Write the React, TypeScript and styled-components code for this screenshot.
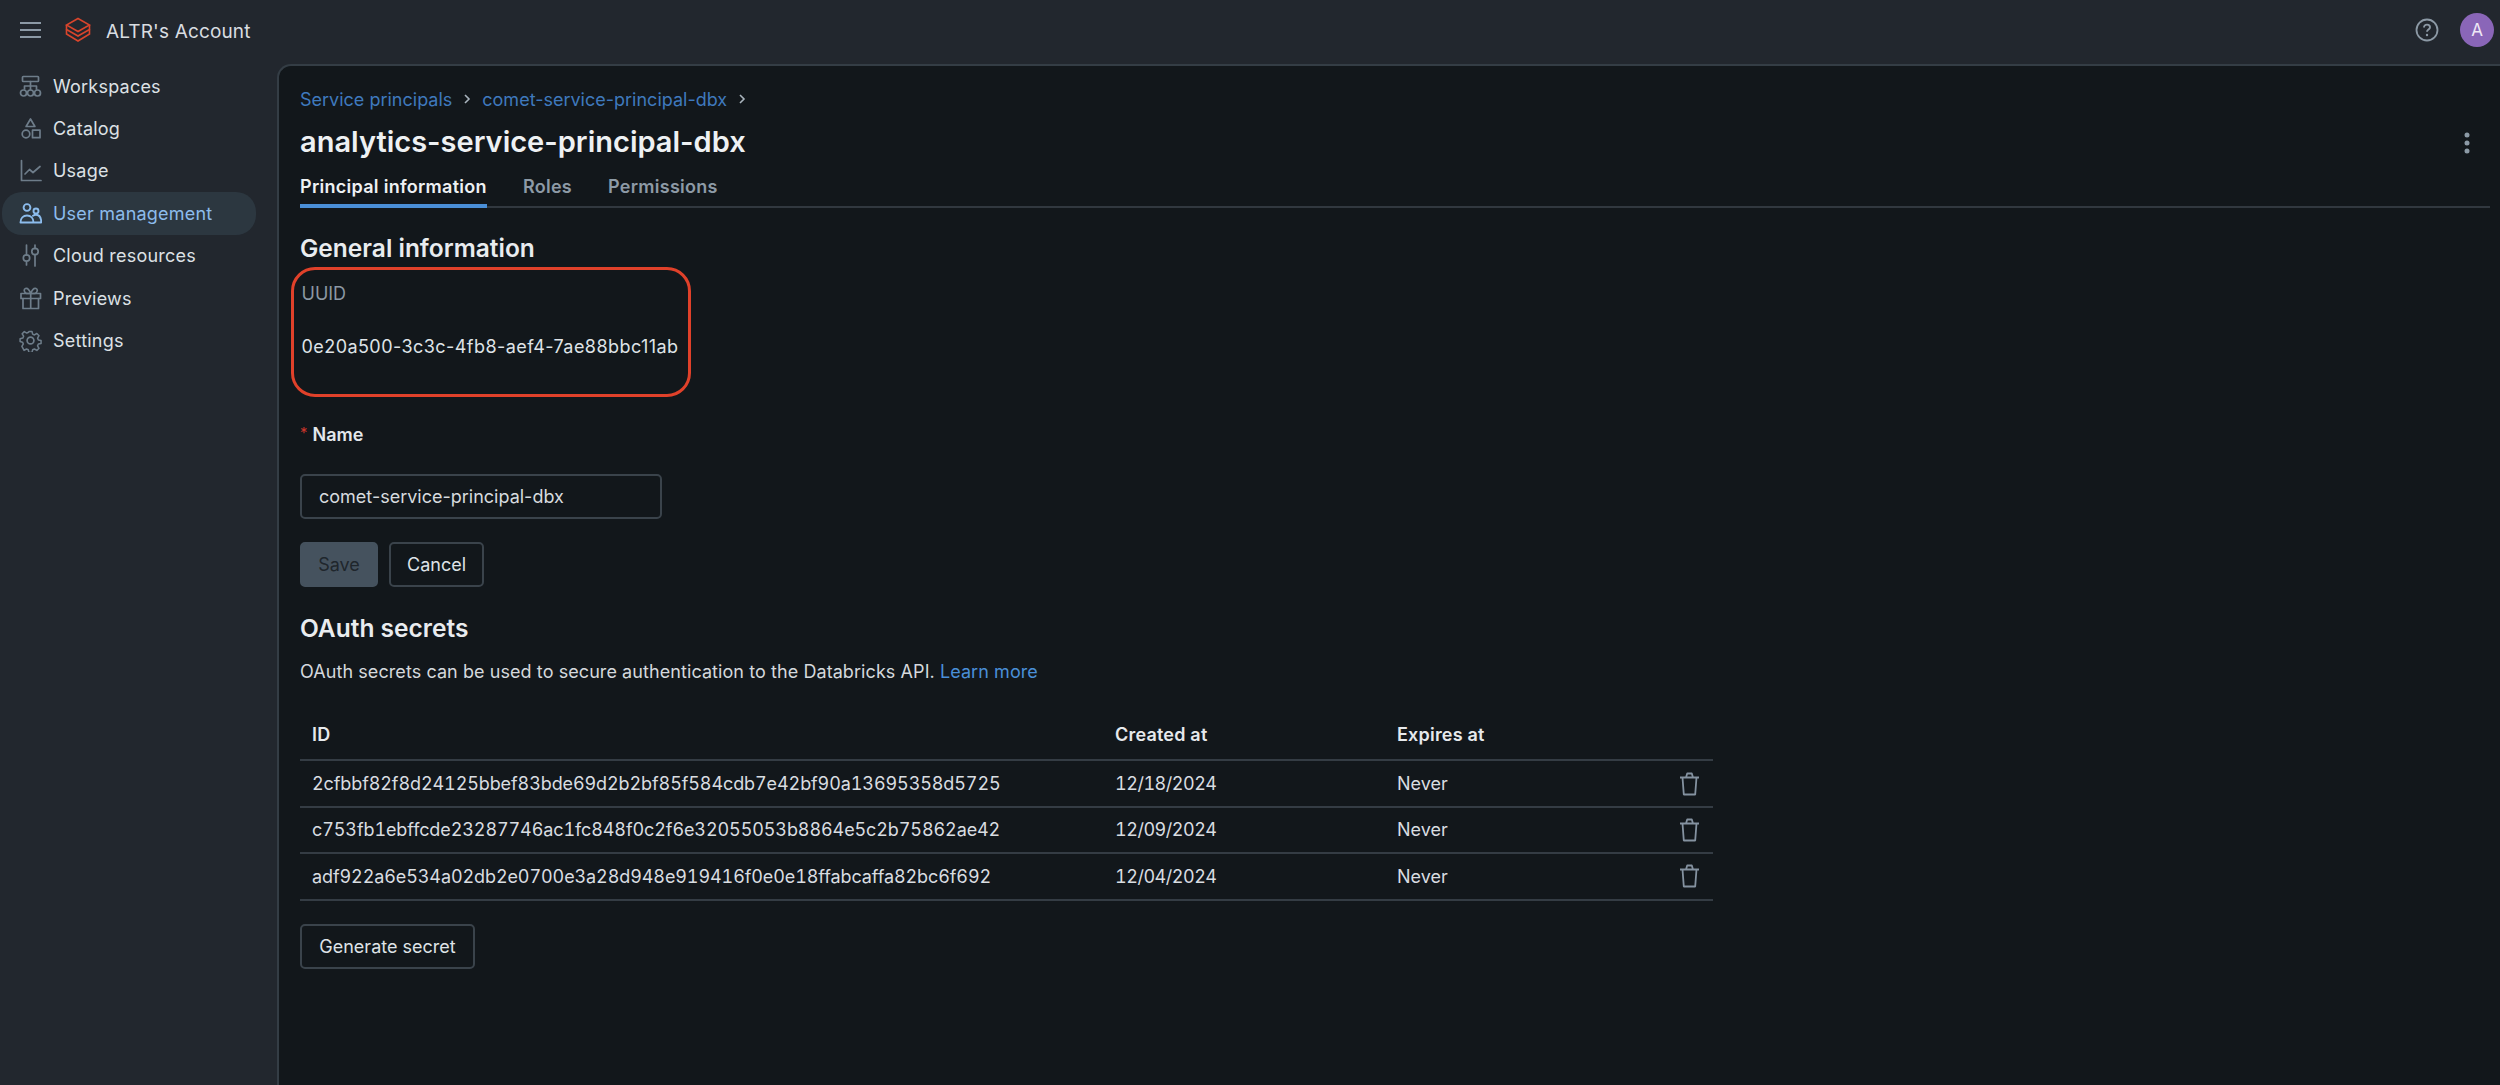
import React from "react";
import styled, { createGlobalStyle } from "styled-components";

const Global = createGlobalStyle`
  html, body { margin: 0; padding: 0; background: #22272e; }
  body { font-family: Inter, "Liberation Sans", sans-serif; color: #e3e7eb; overflow: hidden; }
  * { box-sizing: border-box; }
`;

const Shell = styled.div`
  width: 2500px;
  height: 1085px;
  display: flex;
  flex-direction: column;
  background: #22272e;
  overflow: hidden;
`;

const TopBar = styled.header`
  height: 64px;
  flex: none;
  display: flex;
  align-items: center;
  padding: 0 6px 0 20px;
`;

const Burger = styled.svg`
  width: 21px;
  height: 16px;
  flex: none;
  margin-top: -4px;
  color: #8c99a5;
`;

const Logo = styled.svg`
  width: 26px;
  height: 26px;
  margin-left: 24px;
  margin-top: -4px;
  flex: none;
`;

const AccountName = styled.div`
  margin-left: 15px;
  margin-top: -2px;
  font-size: 19px;
  letter-spacing: 0.15px;
  color: #d9dde1;
`;

const TopRight = styled.div`
  margin-left: auto;
  display: flex;
  align-items: center;
  gap: 21px;
  margin-top: -4px;
`;

const HelpIcon = styled.svg`
  width: 24px;
  height: 24px;
  color: #8c99a5;
`;

const Avatar = styled.div`
  width: 34px;
  height: 34px;
  border-radius: 50%;
  background: #8a66b8;
  color: #efe8f6;
  font-size: 17px;
  display: flex;
  align-items: center;
  justify-content: center;
`;

const Body = styled.div`
  flex: 1;
  display: flex;
  min-height: 0;
`;

const Sidebar = styled.nav`
  width: 277px;
  flex: none;
  padding: 0 21px 0 2px;
  margin-top: 1px;
  display: flex;
  flex-direction: column;
`;

const NavItem = styled.div<{ $active?: boolean }>`
  height: 42.4px;
  display: flex;
  align-items: center;
  gap: 11px;
  padding-left: 17px;
  border-radius: 20px;
  font-size: 18px;
  letter-spacing: 0.22px;
  color: ${(p) => (p.$active ? "#8cbcec" : "#dde1e5")};
  background: ${(p) => (p.$active ? "#2c3740" : "transparent")};
  svg { color: ${(p) => (p.$active ? "#8cbcec" : "#6e7d8a")}; }
`;

const NavIcon = styled.svg`
  width: 23px;
  height: 23px;
  flex: none;
`;

const Panel = styled.main`
  flex: 1;
  min-width: 0;
  background: #12171b;
  border-top: 2px solid #343d45;
  border-left: 2px solid #343d45;
  border-top-left-radius: 14px;
  padding: 21px 10px 0 21px;
  position: relative;
`;

const Crumbs = styled.div`
  height: 24px;
  display: flex;
  align-items: center;
  gap: 10px;
  font-size: 18px;
  color: #3f79bd;
`;

const CrumbChevron = styled.svg`
  width: 10px;
  height: 12px;
  color: #a9b4bd;
`;

const TitleRow = styled.div`
  margin-top: 11px;
  display: flex;
  align-items: center;
  justify-content: space-between;
`;

const Title = styled.h1`
  margin: 0;
  font-size: 29px;
  line-height: 40px;
  font-weight: 600;
  color: #eef1f3;
`;

const Kebab = styled.svg`
  width: 6px;
  height: 22px;
  position: absolute;
  right: 30px;
  top: 66px;
  color: #8c9aa6;
`;

const TabBar = styled.div`
  margin-top: 13px;
  display: flex;
  gap: 36px;
  box-shadow: inset 0 -2px 0 #31383f;
`;

const Tab = styled.div<{ $active?: boolean }>`
  font-size: 18px;
  letter-spacing: 0.28px;
  line-height: 24px;
  font-weight: 600;
  padding-bottom: 5px;
  border-bottom: 4px solid ${(p) => (p.$active ? "#4a8fd8" : "transparent")};
  color: ${(p) => (p.$active ? "#eef1f3" : "#8d9aa6")};
`;

const SectionTitle = styled.h2<{ $mt: number }>`
  margin: ${(p) => p.$mt}px 0 0;
  font-size: 24.5px;
  line-height: 32px;
  font-weight: 600;
  color: #e9ecef;
`;

const Highlight = styled.div`
  margin: 3px 0 0 -9px;
  width: 400px;
  height: 130px;
  border: 3px solid #e0412a;
  border-radius: 24px;
  padding: 12px 0 0 7.5px;
`;

const FieldLabel = styled.div`
  font-size: 18px;
  line-height: 24px;
  color: #8b98a3;
`;

const FieldValue = styled.div`
  margin-top: 29px;
  font-size: 18px;
  letter-spacing: 0.44px;
  line-height: 24px;
  white-space: nowrap;
  color: #dfe3e7;
`;

const NameLabel = styled.div`
  margin-top: 26px;
  font-size: 18px;
  line-height: 24px;
  font-weight: 600;
  color: #e3e7eb;
  display: flex;
  gap: 5px;
`;

const Required = styled.span`
  color: #c9352b;
  font-weight: 400;
  font-size: 15px;
  line-height: 20px;
`;

const TextInput = styled.div`
  margin-top: 27px;
  width: 362px;
  height: 45px;
  border: 2px solid #3a434b;
  border-radius: 5px;
  padding-left: 17px;
  display: flex;
  align-items: center;
  font-size: 18px;
  color: #d7dbdf;
`;

const Actions = styled.div`
  margin-top: 23px;
  display: flex;
  gap: 11px;
`;

const Button = styled.button<{ $disabled?: boolean; $w: number }>`
  width: ${(p) => p.$w}px;
  height: 45px;
  padding: 0;
  font-family: inherit;
  font-size: 18px;
  border-radius: 5px;
  border: 2px solid ${(p) => (p.$disabled ? "#45525e" : "#3a434b")};
  background: ${(p) => (p.$disabled ? "#45525e" : "transparent")};
  color: ${(p) => (p.$disabled ? "#1f262c" : "#dfe3e7")};
`;

const GenerateButton = styled(Button)`
  display: block;
  margin-top: 23px;
`;

const Description = styled.p`
  margin: 16px 0 0;
  font-size: 18px;
  letter-spacing: 0.075px;
  line-height: 24px;
  color: #d5d9dd;
`;

const Link = styled.a`
  color: #4a8fd8;
`;

const Table = styled.div`
  margin-top: 31px;
  width: 1413px;
`;

const Row = styled.div<{ $head?: boolean }>`
  height: 46.4px;
  display: grid;
  grid-template-columns: 815px 282px 1fr 46px;
  align-items: center;
  border-bottom: 2px solid #343c44;
  padding-bottom: ${(p) => (p.$head ? "6px" : "0")};
  font-size: 18px;
  letter-spacing: ${(p) => (p.$head ? "0.2px" : "0")};
  font-weight: ${(p) => (p.$head ? 600 : 400)};
  color: ${(p) => (p.$head ? "#e6e9ec" : "#d9dde1")};
`;

const Cell = styled.div<{ $first?: boolean }>`
  padding-left: ${(p) => (p.$first ? "12px" : "0")};
  white-space: nowrap;
`;

const SecretId = styled(Cell)`
  font-variant-numeric: tabular-nums;
  letter-spacing: -0.1px;
`;

const DateCell = styled(Cell)`
  font-variant-numeric: tabular-nums;
  letter-spacing: -0.48px;
`;

const Trash = styled.svg`
  display: block;
  width: 21px;
  height: 24px;
  margin-left: 12px;
  color: #8492a0;
`;

const stroke = {
  fill: "none",
  stroke: "currentColor",
  strokeWidth: 1.7,
  strokeLinecap: "round" as const,
  strokeLinejoin: "round" as const,
};

const icons: Record<string, React.ReactNode> = {
  workspaces: (
    <g {...stroke}>
      <rect x="3.500" y="1.500" width="16" height="5" rx="0.800" />
      <path d="M11.500 6.500v8M5.500 14v-3h12v3" />
      <circle cx="4.500" cy="18" r="3" />
      <circle cx="11.500" cy="18" r="3" />
      <circle cx="18.500" cy="18" r="3" />
    </g>
  ),
  catalog: (
    <g {...stroke}>
      <path d="M11.500 2l4.400 7.500H7.100z" />
      <circle cx="7" cy="17" r="3.800" />
      <rect x="13.500" y="13.200" width="7.500" height="7.500" />
    </g>
  ),
  usage: (
    <g {...stroke}>
      <path d="M2.500 1.500v20h19.500" />
      <path d="M6 15l4.500-4.500 3.500 3 7-6" />
    </g>
  ),
  users: (
    <g {...stroke} strokeWidth={1.9}>
      <circle cx="8" cy="5.500" r="3.400" />
      <circle cx="17" cy="9" r="2.500" />
      <path d="M1.500 20.500c0-4.500 2.800-7 6.500-7s6.500 2.500 6.500 7zM14 13.800c1-.7 2-1 3-1 3.200 0 5.200 2.600 5.200 7.700h-7.700" />
    </g>
  ),
  cloud: (
    <g {...stroke}>
      <path d="M7.500 1v10M7.500 17.500V21M16 1v3.500M16 11v11" />
      <circle cx="7.500" cy="14" r="3.200" />
      <circle cx="16" cy="7.500" r="3.200" />
    </g>
  ),
  gift: (
    <g {...stroke}>
      <rect x="2" y="6.500" width="19.500" height="5" />
      <path d="M4 11.500v10h15.500v-10M11.700 6.500v15" />
      <path d="M11.700 6.500C10 2 8 1 6.500 1.500 4.500 2.200 5 5.500 7.500 6.500zM11.700 6.500C13.400 2 15.500 1 17 1.500c2 .7 1.500 4-1 5z" />
    </g>
  ),
  gear: (
    <g {...stroke}>
      <circle cx="11.500" cy="11.500" r="3.400" />
      <path d="M9.800 1.500h3.400l.7 3 2 .9 2.700-1.600 2.400 2.400-1.600 2.700.9 2.100 3 .6v3.200l-3 .7-.9 2 1.600 2.700-2.400 2.400-2.700-1.600-2 .9-.7 3H9.800l-.7-3-2-.9-2.700 1.600L2 18.100l1.600-2.700-.9-2-2.700-.7V9.500l3-.6.900-2.100L2.300 4.100l2.400-2.400 2.700 1.600 2-.9z" transform="translate(1.100 1.100) scale(0.9)" />
    </g>
  ),
};

const navItems = [
  { icon: "workspaces", label: "Workspaces" },
  { icon: "catalog", label: "Catalog" },
  { icon: "usage", label: "Usage" },
  { icon: "users", label: "User management", active: true },
  { icon: "cloud", label: "Cloud resources" },
  { icon: "gift", label: "Previews" },
  { icon: "gear", label: "Settings" },
];

const secrets = [
  { id: "2cfbbf82f8d24125bbef83bde69d2b2bf85f584cdb7e42bf90a13695358d5725", created: "12/18/2024" },
  { id: "c753fb1ebffcde23287746ac1fc848f0c2f6e32055053b8864e5c2b75862ae42", created: "12/09/2024" },
  { id: "adf922a6e534a02db2e0700e3a28d948e919416f0e0e18ffabcaffa82bc6f692", created: "12/04/2024" },
];

const Chevron = () => (
  <CrumbChevron viewBox="0 0 10 12">
    <path d="M3 2l4 4-4 4" fill="none" stroke="currentColor" strokeWidth="1.600" />
  </CrumbChevron>
);

export default function App() {
  return (
    <Shell>
      <Global />
      <TopBar>
        <Burger viewBox="0 0 21 16">
          <path d="M0 1h21M0 8h21M0 15h21" stroke="currentColor" strokeWidth="1.800" fill="none" />
        </Burger>
        <Logo viewBox="0 0 26 26">
          <g fill="none" stroke="#d9452c" strokeWidth="1.600" strokeLinejoin="miter">
            <path d="M13 1.500L24.500 8 13 14.500 1.500 8z" />
            <path d="M1.500 8v4.500L13 19l11.500-6.500V8" />
            <path d="M1.500 12.500V17L13 24l11.500-7v-4.500" />
          </g>
        </Logo>
        <AccountName>ALTR's Account</AccountName>
        <TopRight>
          <HelpIcon viewBox="0 0 24 24">
            <circle cx="12" cy="12" r="10.500" fill="none" stroke="currentColor" strokeWidth="1.800" />
            <path d="M9 9.500c0-1.800 1.300-2.900 3-2.900s3 1 3 2.600c0 2.400-3 2.300-3 4.500" fill="none" stroke="currentColor" strokeWidth="1.900" />
            <circle cx="12" cy="17" r="1.200" fill="currentColor" />
          </HelpIcon>
          <Avatar>A</Avatar>
        </TopRight>
      </TopBar>
      <Body>
        <Sidebar>
          {navItems.map((n) => (
            <NavItem key={n.label} $active={n.active}>
              <NavIcon viewBox="0 0 23 23">{icons[n.icon]}</NavIcon>
              {n.label}
            </NavItem>
          ))}
        </Sidebar>
        <Panel>
          <Crumbs>
            <span>Service principals</span>
            <Chevron />
            <span>comet-service-principal-dbx</span>
            <Chevron />
          </Crumbs>
          <TitleRow>
            <Title>analytics-service-principal-dbx</Title>
          </TitleRow>
          <Kebab viewBox="0 0 6 22">
            <circle cx="3" cy="3" r="2.500" fill="currentColor" />
            <circle cx="3" cy="11" r="2.500" fill="currentColor" />
            <circle cx="3" cy="19" r="2.500" fill="currentColor" />
          </Kebab>
          <TabBar>
            <Tab $active>Principal information</Tab>
            <Tab>Roles</Tab>
            <Tab>Permissions</Tab>
          </TabBar>
          <SectionTitle $mt={24}>General information</SectionTitle>
          <Highlight>
            <FieldLabel>UUID</FieldLabel>
            <FieldValue>0e20a500-3c3c-4fb8-aef4-7ae88bbc11ab</FieldValue>
          </Highlight>
          <NameLabel>
            <Required>*</Required>
            Name
          </NameLabel>
          <TextInput>comet-service-principal-dbx</TextInput>
          <Actions>
            <Button $disabled $w={78}>Save</Button>
            <Button $w={95}>Cancel</Button>
          </Actions>
          <SectionTitle $mt={25}>OAuth secrets</SectionTitle>
          <Description>
            OAuth secrets can be used to secure authentication to the Databricks API. <Link>Learn more</Link>
          </Description>
          <Table>
            <Row $head>
              <Cell $first>ID</Cell>
              <Cell>Created at</Cell>
              <Cell>Expires at</Cell>
              <Cell />
            </Row>
            {secrets.map((s) => (
              <Row key={s.id}>
                <SecretId $first>{s.id}</SecretId>
                <DateCell>{s.created}</DateCell>
                <Cell>Never</Cell>
                <Cell>
                  <Trash viewBox="0 0 21 24">
                    <path d="M1 5.500h19M7 5.500l1.200-4h4.600l1.200 4M3.500 5.500l1.300 17h11.400l1.300-17" fill="none" stroke="currentColor" strokeWidth="1.800" strokeLinejoin="round" />
                  </Trash>
                </Cell>
              </Row>
            ))}
          </Table>
          <GenerateButton $w={175}>Generate secret</GenerateButton>
        </Panel>
      </Body>
    </Shell>
  );
}
